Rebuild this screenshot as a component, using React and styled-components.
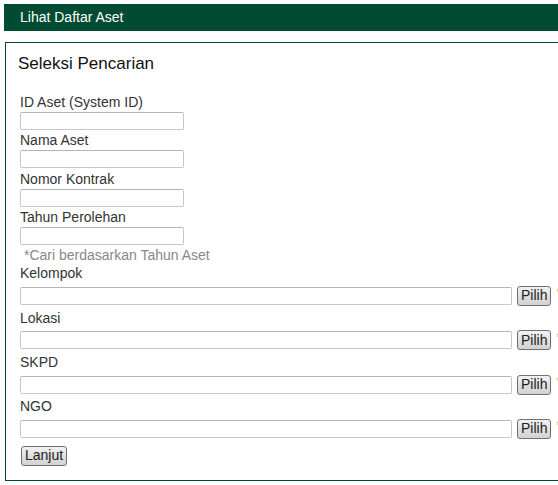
import React from 'react';
import styled, { createGlobalStyle } from 'styled-components';

const GlobalStyle = createGlobalStyle`
  html, body {
    margin: 0;
    padding: 0;
    overflow: hidden;
    background: #fff;
  }
  body {
    font-family: "Liberation Sans", Arial, sans-serif;
    font-size: 14px;
    color: #333;
  }
`;

const Page = styled.div`
  padding: 4px 0 0 4px;
  width: 580px;
`;

const TitleBar = styled.div`
  background: #004b32;
  color: #fff;
  height: 27px;
  line-height: 27px;
  padding-left: 16px;
  font-size: 14px;
`;

const Panel = styled.div`
  margin: 11px 0 0 1px;
  border: 1px solid #00472e;
  padding: 11px 12px 14px 12px;
  box-sizing: border-box;
  height: 439px;
`;

const PanelTitle = styled.h3`
  margin: 0 0 19px 0;
  font-size: 17px;
  font-weight: normal;
  color: #111;
  line-height: 20px;
`;

const Field = styled.div`
  padding-left: 2px;
`;

const Label = styled.div`
  line-height: 19px;
  height: 19px;
  color: #333;
`;

const TextInput = styled.input`
  display: block;
  box-sizing: border-box;
  width: ${({ wide }) => (wide ? '492px' : '164px')};
  height: 18px;
  margin: 0 0 ${({ wide }) => (wide ? '0' : '1.33px')} 0;
  border: 1px solid #c8c8c8;
  border-top-color: #b5b5b5;
  border-radius: 2px;
  padding: 0 3px;
  font: inherit;
  background: #fff;
`;

const Hint = styled.div`
  color: #888;
  padding-left: 4px;
  line-height: 18px;
  margin-top: 1px;
`;

const PickRow = styled.div`
  display: flex;
  align-items: center;
  gap: 5px;
  height: 25.33px;
`;

const Button = styled.button`
  font-family: "Liberation Sans", Arial, sans-serif;
  font-size: 14px;
  color: #222;
  height: 20px;
  padding: 0 3px;
  border: 1px solid #707070;
  border-radius: 3px;
  background: linear-gradient(#f2f2f2, #e0e0e0 50%, #d2d2d2);
  line-height: 17px;
`;

const Required = styled.span`
  color: #c8a86a;
  font-size: 10px;
  align-self: flex-start;
  margin-top: 4px;
`;

const Actions = styled.div`
  padding-left: 3px;
  margin-top: 4px;
`;

const simpleFields = ['ID Aset (System ID)', 'Nama Aset', 'Nomor Kontrak'];
const pickFields = ['Kelompok', 'Lokasi', 'SKPD', 'NGO'];

const App = () => (
  <>
    <GlobalStyle />
    <Page>
      <TitleBar>Lihat Daftar Aset</TitleBar>
      <Panel>
        <PanelTitle>Seleksi Pencarian</PanelTitle>
        {simpleFields.map(label => (
          <Field key={label}>
            <Label>{label}</Label>
            <TextInput type="text" />
          </Field>
        ))}
        <Field>
          <Label>Tahun Perolehan</Label>
          <TextInput type="text" />
          <Hint>*Cari berdasarkan Tahun Aset</Hint>
        </Field>
        {pickFields.map(label => (
          <Field key={label}>
            <Label>{label}</Label>
            <PickRow>
              <TextInput type="text" wide />
              <Button type="button">Pilih</Button>
              <Required>*</Required>
            </PickRow>
          </Field>
        ))}
        <Actions>
          <Button type="button">Lanjut</Button>
        </Actions>
      </Panel>
    </Page>
  </>
);

export default App;
